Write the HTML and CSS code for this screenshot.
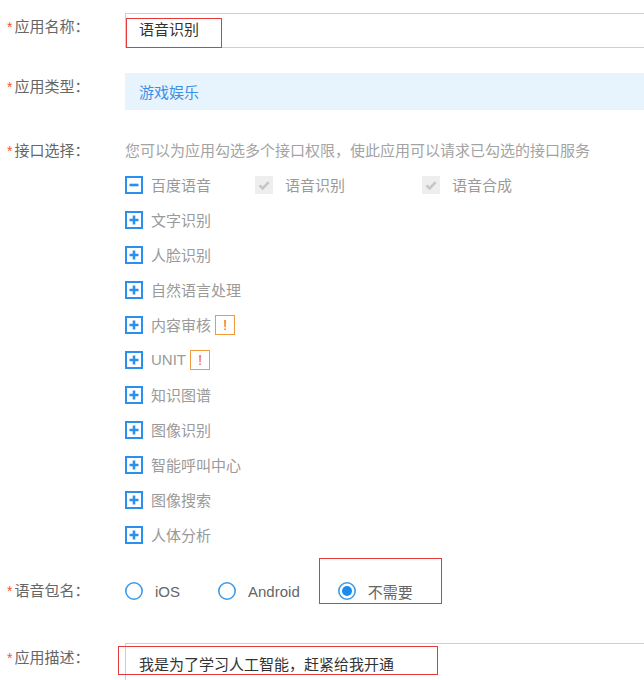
FILE: index.html
```html
<!DOCTYPE html>
<html lang="zh-CN">
<head>
<meta charset="utf-8">
<title>创建应用</title>
<link rel="stylesheet" href="styles.css">
</head>
<body>
<form class="form">
  <div class="row row-name">
    <div class="label"><span class="req">*</span>应用名称：</div>
    <div class="name-input"><span class="name-text">语音识别</span></div>
  </div>

  <div class="row row-type">
    <div class="label"><span class="req">*</span>应用类型：</div>
    <div class="type-box">游戏娱乐</div>
  </div>

  <div class="row row-api">
    <div class="label"><span class="req">*</span>接口选择：</div>
    <div class="api">
      <div class="api-desc">您可以为应用勾选多个接口权限，使此应用可以请求已勾选的接口服务</div>
      <ul class="api-list">
        <li class="api-item">
          <span class="api-main">
            <svg class="tog" viewBox="0 0 18 18"><rect x="1" y="1" width="16" height="16" fill="#fff" stroke="#2b8ff0" stroke-width="2"/><path d="M4.5 9h9" stroke="#2b8ff0" stroke-width="2.6"/></svg>
            <span>百度语音</span>
          </span>
          <span class="sub">
            <svg class="chk" viewBox="0 0 18 18"><rect width="18" height="18" fill="#eeeeee"/><path d="M4.5 9.3l3.2 3.2 6-6.4" fill="none" stroke="#c6c6c6" stroke-width="2.6"/></svg>
            <span>语音识别</span>
          </span>
          <span class="sub">
            <svg class="chk" viewBox="0 0 18 18"><rect width="18" height="18" fill="#eeeeee"/><path d="M4.5 9.3l3.2 3.2 6-6.4" fill="none" stroke="#c6c6c6" stroke-width="2.6"/></svg>
            <span>语音合成</span>
          </span>
        </li>
        <li class="api-item"><svg class="tog" viewBox="0 0 18 18"><rect x="1" y="1" width="16" height="16" fill="#fff" stroke="#2b8ff0" stroke-width="2"/><path d="M4.5 9h9M9 4.5v9" stroke="#2b8ff0" stroke-width="2.6"/></svg><span>文字识别</span></li>
        <li class="api-item"><svg class="tog" viewBox="0 0 18 18"><rect x="1" y="1" width="16" height="16" fill="#fff" stroke="#2b8ff0" stroke-width="2"/><path d="M4.5 9h9M9 4.5v9" stroke="#2b8ff0" stroke-width="2.6"/></svg><span>人脸识别</span></li>
        <li class="api-item"><svg class="tog" viewBox="0 0 18 18"><rect x="1" y="1" width="16" height="16" fill="#fff" stroke="#2b8ff0" stroke-width="2"/><path d="M4.5 9h9M9 4.5v9" stroke="#2b8ff0" stroke-width="2.6"/></svg><span>自然语言处理</span></li>
        <li class="api-item"><svg class="tog" viewBox="0 0 18 18"><rect x="1" y="1" width="16" height="16" fill="#fff" stroke="#2b8ff0" stroke-width="2"/><path d="M4.5 9h9M9 4.5v9" stroke="#2b8ff0" stroke-width="2.6"/></svg><span>内容审核</span><span class="warn">!</span></li>
        <li class="api-item"><svg class="tog" viewBox="0 0 18 18"><rect x="1" y="1" width="16" height="16" fill="#fff" stroke="#2b8ff0" stroke-width="2"/><path d="M4.5 9h9M9 4.5v9" stroke="#2b8ff0" stroke-width="2.6"/></svg><span>UNIT</span><span class="warn">!</span></li>
        <li class="api-item"><svg class="tog" viewBox="0 0 18 18"><rect x="1" y="1" width="16" height="16" fill="#fff" stroke="#2b8ff0" stroke-width="2"/><path d="M4.5 9h9M9 4.5v9" stroke="#2b8ff0" stroke-width="2.6"/></svg><span>知识图谱</span></li>
        <li class="api-item"><svg class="tog" viewBox="0 0 18 18"><rect x="1" y="1" width="16" height="16" fill="#fff" stroke="#2b8ff0" stroke-width="2"/><path d="M4.5 9h9M9 4.5v9" stroke="#2b8ff0" stroke-width="2.6"/></svg><span>图像识别</span></li>
        <li class="api-item"><svg class="tog" viewBox="0 0 18 18"><rect x="1" y="1" width="16" height="16" fill="#fff" stroke="#2b8ff0" stroke-width="2"/><path d="M4.5 9h9M9 4.5v9" stroke="#2b8ff0" stroke-width="2.6"/></svg><span>智能呼叫中心</span></li>
        <li class="api-item"><svg class="tog" viewBox="0 0 18 18"><rect x="1" y="1" width="16" height="16" fill="#fff" stroke="#2b8ff0" stroke-width="2"/><path d="M4.5 9h9M9 4.5v9" stroke="#2b8ff0" stroke-width="2.6"/></svg><span>图像搜索</span></li>
        <li class="api-item"><svg class="tog" viewBox="0 0 18 18"><rect x="1" y="1" width="16" height="16" fill="#fff" stroke="#2b8ff0" stroke-width="2"/><path d="M4.5 9h9M9 4.5v9" stroke="#2b8ff0" stroke-width="2.6"/></svg><span>人体分析</span></li>
      </ul>
    </div>
  </div>

  <div class="row row-pkg">
    <div class="label"><span class="req">*</span>语音包名：</div>
    <div class="radios">
      <span class="opt"><svg class="radio" viewBox="0 0 18 18"><circle cx="9" cy="9" r="8.2" fill="#fff" stroke="#3a9bea" stroke-width="1.6"/></svg><span>iOS</span></span>
      <span class="opt"><svg class="radio" viewBox="0 0 18 18"><circle cx="9" cy="9" r="8.2" fill="#fff" stroke="#3a9bea" stroke-width="1.6"/></svg><span>Android</span></span>
      <span class="opt opt-marked"><svg class="radio" viewBox="0 0 18 18"><circle cx="9" cy="9" r="8.2" fill="#fff" stroke="#3a9bea" stroke-width="1.6"/><circle cx="9" cy="9" r="5" fill="#1a8cf0"/></svg><span>不需要</span><span class="mark mark-pkg"></span></span>
    </div>
  </div>

  <div class="row row-desc">
    <div class="label"><span class="req">*</span>应用描述：</div>
    <div class="desc-input">我是为了学习人工智能，赶紧给我开通<span class="mark mark-desc"></span></div>
  </div>
</form>
</body>
</html>
```
FILE: styles.css
```css
html, body {
  margin: 0;
  padding: 0;
  overflow: hidden;
  background: #fff;
}
body {
  width: 644px;
  font-family: "Liberation Sans", "Noto Sans CJK SC", sans-serif;
  font-size: 15px;
  color: #666;
}
.form {
  padding-top: 13px;
}
.row {
  display: flex;
  align-items: flex-start;
}
.label {
  width: 125px;
  flex: none;
  box-sizing: border-box;
  padding-left: 7px;
  line-height: 20px;
  color: #666;
  white-space: nowrap;
}
.req {
  color: #f2552f;
  font-size: 14px;
  margin-right: 2px;
}

/* row 1 */
.row-name .label { padding-top: 4px; }
.name-input {
  flex: 1;
  height: 35px;
  box-sizing: border-box;
  border: 1px solid #cfcfcf;
  border-right: none;
}
.name-text {
  display: inline-block;
  box-sizing: border-box;
  width: 96px;
  height: 30px;
  margin-top: 4px;
  border: 1px solid #e8393a;
  padding-left: 12px;
  line-height: 22px;
  color: #333;
}

/* row 2 */
.row-type { margin-top: 25px; }
.row-type .label { padding-top: 4px; }
.type-box {
  flex: 1;
  height: 37px;
  box-sizing: border-box;
  background: #e8f4fd;
  padding: 10px 0 0 14px;
  line-height: 20px;
  color: #3b8fe6;
}

/* row 3 */
.row-api { margin-top: 31px; }
.api { flex: 1; }
.api-desc {
  line-height: 20px;
  color: #a3a3a3;
  white-space: nowrap;
}
.api-list {
  list-style: none;
  margin: 6px 0 0;
  padding: 0;
}
.api-item {
  display: flex;
  align-items: center;
  height: 35px;
  color: #9a9a9a;
}
.api-main {
  display: flex;
  align-items: center;
  width: 130px;
}
.tog {
  width: 18px;
  height: 18px;
  flex: none;
  margin-right: 8px;
}
.sub {
  display: flex;
  align-items: center;
  width: 167px;
}
.chk {
  width: 18px;
  height: 18px;
  flex: none;
  margin-right: 12px;
}
.warn {
  display: inline-flex;
  align-items: center;
  justify-content: center;
  box-sizing: border-box;
  width: 20px;
  height: 20px;
  margin-left: 4px;
  border: 1px solid #f29a38;
  color: #f0652c;
  font-size: 15px;
}

/* row 4 */
.row-pkg { margin-top: 29px; }
.radios {
  display: flex;
  align-items: center;
  height: 20px;
}
.opt {
  display: flex;
  align-items: center;
  margin-right: 38px;
  color: #666;
}
.opt-marked { position: relative; }
.radio {
  width: 18px;
  height: 18px;
  flex: none;
  margin-right: 12px;
}
.mark {
  position: absolute;
  box-sizing: border-box;
  border: 1px solid #e8393a;
  pointer-events: none;
}
.mark-pkg {
  left: -19px;
  top: -23px;
  width: 123px;
  height: 46px;
}

/* row 5 */
.row-desc { margin-top: 42px; }
.row-desc .label { padding-top: 5px; }
.desc-input {
  position: relative;
  flex: 1;
  height: 37px;
  box-sizing: border-box;
  border-top: 1px solid #cfcfcf;
  border-left: 1px solid #cfcfcf;
  padding: 11px 0 0 13px;
  line-height: 20px;
  color: #333;
  white-space: nowrap;
}
.mark-desc {
  left: -8px;
  top: 2px;
  width: 320px;
  height: 29px;
}
```
